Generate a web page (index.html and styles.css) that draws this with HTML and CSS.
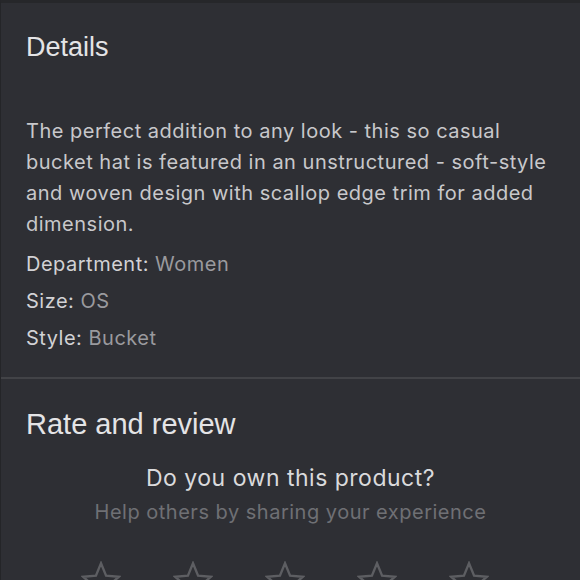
FILE: index.html
```html
<!DOCTYPE html>
<html>
<head>
<link rel="stylesheet" href="styles.css">
</head>
<body>

<div class="page">

  <!-- Details section -->
  <section class="details">
    <h2 class="title">Details</h2>
    <p class="desc">The perfect addition to any look - this so casual bucket hat is featured in an unstructured - soft-style and woven design with scallop edge trim for added dimension.</p>
    <div class="meta first"><span class="label">Department:</span> <span class="value">Women</span></div>
    <div class="meta"><span class="label">Size:</span> <span class="value">OS</span></div>
    <div class="meta"><span class="label">Style:</span> <span class="value">Bucket</span></div>
  </section>

  <!-- Rate and review -->
  <section class="review">
    <h2 class="title big">Rate and review</h2>
    <div class="ask">Do you own this product?</div>
    <div class="help">Help others by sharing your experience</div>
    <div class="stars">
      <svg class="star" viewBox="0 0 44 42"><path d="M22 2.5 L27.6 16.2 L41.8 17.4 L31 26.7 L34.3 40.6 L22 33.2 L9.7 40.6 L13 26.7 L2.2 17.4 L16.4 16.2 Z"/></svg>
      <svg class="star" viewBox="0 0 44 42"><path d="M22 2.5 L27.6 16.2 L41.8 17.4 L31 26.7 L34.3 40.6 L22 33.2 L9.7 40.6 L13 26.7 L2.2 17.4 L16.4 16.2 Z"/></svg>
      <svg class="star" viewBox="0 0 44 42"><path d="M22 2.5 L27.6 16.2 L41.8 17.4 L31 26.7 L34.3 40.6 L22 33.2 L9.7 40.6 L13 26.7 L2.2 17.4 L16.4 16.2 Z"/></svg>
      <svg class="star" viewBox="0 0 44 42"><path d="M22 2.5 L27.6 16.2 L41.8 17.4 L31 26.7 L34.3 40.6 L22 33.2 L9.7 40.6 L13 26.7 L2.2 17.4 L16.4 16.2 Z"/></svg>
      <svg class="star" viewBox="0 0 44 42"><path d="M22 2.5 L27.6 16.2 L41.8 17.4 L31 26.7 L34.3 40.6 L22 33.2 L9.7 40.6 L13 26.7 L2.2 17.4 L16.4 16.2 Z"/></svg>
    </div>
  </section>

</div>

</body>
</html>
```

FILE: styles.css
```css
body {
  margin: 0;
  background: #2e2f34;
  font-family: Inter, "Liberation Sans", sans-serif;
  overflow: hidden;
}

.page {
  height: 580px;
  border-top: 3px solid #26272a;
  border-left: 1px solid #242528;
  box-sizing: border-box;
  overflow: hidden;
}

.title {
  margin: 0;
  font-family: "Liberation Sans", Arial, sans-serif;
  font-weight: normal;
  font-size: 27px;
  line-height: 32px;
  color: #e4e4e6;
}

.title.big {
  font-size: 29px;
  line-height: 34px;
}

/* Details block */
.details {
  padding: 28px 25px 23px 25px;
  border-bottom: 2px solid #424347;
}

.desc {
  width: 530px;
  margin: 53px 0 0 0;
  font-size: 20px;
  line-height: 31px;
  letter-spacing: 0.5px;
  color: #c8c8cb;
}

.meta {
  margin-top: 6px;
  font-size: 20px;
  line-height: 31px;
  letter-spacing: 0.5px;
}

.meta.first {
  margin-top: 9px;
}

.label {
  color: #d2d2d5;
}

.value {
  color: #9a9a9e;
}

/* Review block */
.review {
  padding: 28px 25px 0 25px;
}

.ask {
  margin-top: 23px;
  text-align: center;
  font-size: 23px;
  line-height: 28px;
  letter-spacing: 0.5px;
  color: #dadadc;
}

.help {
  margin-top: 6px;
  text-align: center;
  font-size: 20px;
  line-height: 28px;
  letter-spacing: 0.5px;
  color: #6f7074;
}

.stars {
  display: flex;
  justify-content: center;
  gap: 52px;
  margin-top: 35px;
  padding-right: 12px;
}

.star {
  width: 40px;
  height: 38px;
}

.star path {
  fill: none;
  stroke: #5d5e62;
  stroke-width: 2.6;
}
```
